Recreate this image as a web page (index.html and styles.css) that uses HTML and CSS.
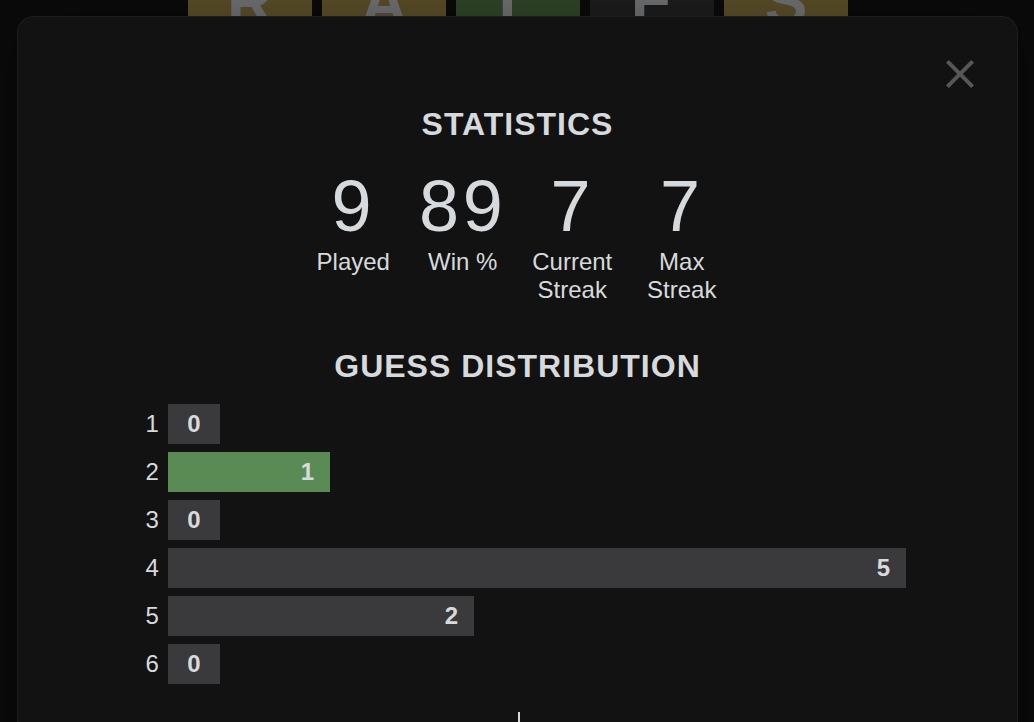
FILE: index.html
```html
<!DOCTYPE html>
<html lang="en">
<head>
<meta charset="utf-8">
<title>Statistics</title>
<link rel="stylesheet" href="styles.css">
</head>
<body>
<div class="board">
  <div class="tile present">R</div>
  <div class="tile present">A</div>
  <div class="tile correct">L</div>
  <div class="tile absent">E</div>
  <div class="tile present">S</div>
</div>
<div class="modal">
  <button class="close" aria-label="Close">
    <svg viewBox="0 0 24 24" width="48" height="48"><path d="M19 6.41L17.59 5 12 10.59 6.41 5 5 6.41 10.59 12 5 17.59 6.41 19 12 13.41 17.59 19 19 17.59 13.41 12z"/></svg>
  </button>
  <h1 class="title">Statistics</h1>
  <div class="stats">
    <div class="stat"><div class="value">9</div><div class="label">Played</div></div>
    <div class="stat"><div class="value">89</div><div class="label">Win %</div></div>
    <div class="stat"><div class="value">7</div><div class="label">Current Streak</div></div>
    <div class="stat"><div class="value">7</div><div class="label">Max Streak</div></div>
  </div>
  <h1 class="title dist-title">Guess Distribution</h1>
  <div class="graph">
    <div class="row"><div class="guess">1</div><div class="track"><div class="bar" style="width:52px">0</div></div></div>
    <div class="row"><div class="guess">2</div><div class="track"><div class="bar right win" style="width:162px">1</div></div></div>
    <div class="row"><div class="guess">3</div><div class="track"><div class="bar" style="width:52px">0</div></div></div>
    <div class="row"><div class="guess">4</div><div class="track"><div class="bar right" style="width:738px">5</div></div></div>
    <div class="row"><div class="guess">5</div><div class="track"><div class="bar right" style="width:306px">2</div></div></div>
    <div class="row"><div class="guess">6</div><div class="track"><div class="bar" style="width:52px">0</div></div></div>
  </div>
  <div class="footer">
    <div class="countdown"></div>
    <div class="share"></div>
  </div>
</div>
</body>
</html>
```
FILE: styles.css
```css
* { box-sizing: border-box; }
html, body { margin: 0; height: 100%; }
body {
  background: #0a0a0a;
  overflow: hidden;
  font-family: "Liberation Sans", Arial, sans-serif;
  color: #d7dadc;
  position: relative;
}
.board {
  display: flex;
  justify-content: center;
  gap: 10px;
  padding-left: 2px;
  margin-top: -62px;
}
.tile {
  width: 124px;
  height: 124px;
  display: flex;
  align-items: center;
  justify-content: center;
  padding-top: 4px;
  font-size: 64px;
  font-weight: 700;
  line-height: 1;
  color: #6c6e70;
}
.present { background: #584c27; }
.correct { background: #2d4427; }
.absent { background: #1c1c1d; }

.modal {
  position: absolute;
  left: 17px;
  top: 16px;
  width: 1001px;
  height: 780px;
  background: #121213;
  border: 1px solid #1e1e1f;
  border-radius: 16px;
  box-shadow: 0 8px 56px rgba(0, 0, 0, 0.3);
  padding-top: 89px;
  display: flex;
  flex-direction: column;
  align-items: center;
}
.close {
  position: absolute;
  top: 33px;
  right: 33px;
  width: 48px;
  height: 48px;
  padding: 0;
  border: 0;
  background: none;
}
.close svg { display: block; fill: #565758; }

.title {
  margin: 0;
  font-size: 32px;
  font-weight: 700;
  line-height: 37px;
  letter-spacing: 1px;
  text-transform: uppercase;
  text-align: center;
}
.stats {
  display: grid;
  grid-template-columns: repeat(4, 109.5px);
  margin-top: 22px;
}
.value {
  font-size: 72px;
  line-height: 83px;
  letter-spacing: 0.05em;
  text-align: center;
}
.label {
  font-size: 24px;
  line-height: 27.6px;
  text-align: center;
}
.dist-title { margin-top: 45px; }

.graph {
  margin-top: 19px;
  width: 744px;
  display: flex;
  flex-direction: column;
  gap: 8px;
}
.row {
  display: grid;
  grid-template-columns: 22.5px 1fr;
  height: 40px;
}
.guess {
  font-size: 24px;
  line-height: 40px;
}
.track { min-width: 0; }
.bar {
  height: 40px;
  background: #3a3a3c;
  display: flex;
  align-items: center;
  justify-content: center;
  font-size: 24px;
  font-weight: 700;
  color: #d7dadc;
}
.bar.right {
  justify-content: flex-end;
  padding-right: 16px;
}
.bar.win { background: #5b8b54; }

.footer {
  margin-top: 28px;
  width: 100%;
  display: grid;
  grid-template-columns: 502px 1fr;
  height: 80px;
}
.countdown { border-right: 2px solid #d7dadc; }
```
